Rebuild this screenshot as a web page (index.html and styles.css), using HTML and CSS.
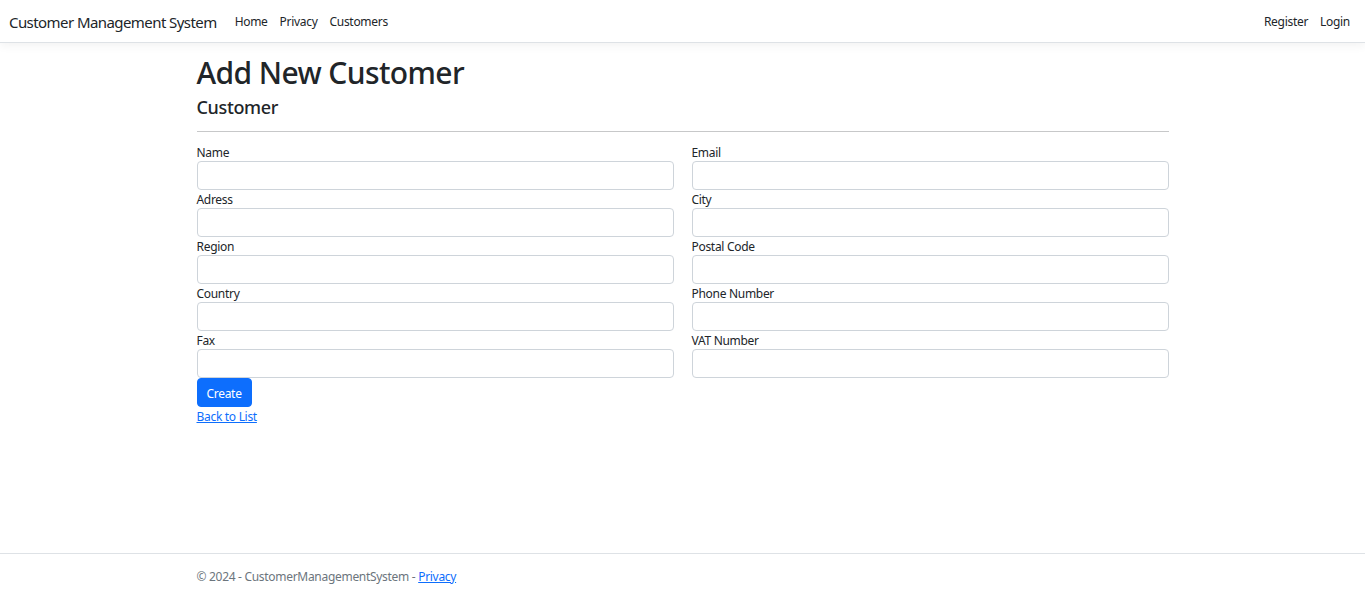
FILE: index.html
```html
<!DOCTYPE html>
<html lang="en">
<head>
<meta charset="utf-8">
<title>Add New Customer - Customer Management System</title>
<link rel="stylesheet" href="styles.css">
</head>
<body>
<header>
  <nav class="navbar">
    <a class="brand" href="#">Customer Management System</a>
    <ul class="nav nav-main">
      <li><a class="nav-link" href="#">Home</a></li>
      <li><a class="nav-link" href="#">Privacy</a></li>
      <li><a class="nav-link" href="#">Customers</a></li>
    </ul>
    <ul class="nav nav-right">
      <li><a class="nav-link" href="#">Register</a></li>
      <li><a class="nav-link" href="#">Login</a></li>
    </ul>
  </nav>
</header>
<div class="container">
  <main>
    <h1 class="title">Add New Customer</h1>
    <h4 class="subtitle">Customer</h4>
    <hr class="divider">
    <form class="form">
      <div class="grid">
        <div class="field"><label>Name</label><input class="control" type="text"></div>
        <div class="field"><label>Email</label><input class="control" type="text"></div>
        <div class="field"><label>Adress</label><input class="control" type="text"></div>
        <div class="field"><label>City</label><input class="control" type="text"></div>
        <div class="field"><label>Region</label><input class="control" type="text"></div>
        <div class="field"><label>Postal Code</label><input class="control" type="text"></div>
        <div class="field"><label>Country</label><input class="control" type="text"></div>
        <div class="field"><label>Phone Number</label><input class="control" type="text"></div>
        <div class="field"><label>Fax</label><input class="control" type="text"></div>
        <div class="field"><label>VAT Number</label><input class="control" type="text"></div>
      </div>
      <button type="button" class="btn">Create</button>
    </form>
    <div class="back"><a class="link" href="#">Back to List</a></div>
  </main>
</div>
<footer class="footer">
  <div class="container">&copy; 2024 - CustomerManagementSystem - <a class="link" href="#">Privacy</a></div>
</footer>
</body>
</html>
```
FILE: styles.css
```css
* { box-sizing: border-box; }
html, body { margin: 0; padding: 0; }
body {
  font-family: "Noto Sans", "Open Sans", sans-serif;
  font-size: 12px;
  line-height: 1.5;
  letter-spacing: -0.025em;
  color: #212529;
  background: #fff;
  min-height: 599px;
  position: relative;
}
a { text-decoration: none; }
.navbar {
  display: flex;
  align-items: center;
  padding: 6px 9px;
  border-bottom: 1px solid #dee2e6;
  box-shadow: 0 3px 9px rgba(0,0,0,.05);
  height: 43px;
  margin-bottom: 12px;
}
.brand {
  font-size: 15px;
  letter-spacing: -0.038em;
  color: #212529;
  margin-right: 12px;
  padding-top: 2px;
  white-space: nowrap;
}
.nav { list-style: none; margin: 0; padding: 0; display: flex; }
.nav-main { flex: 1; }
.nav-right { margin-right: 0; }
.nav-link {
  display: block;
  padding: 7px 6px 5px;
  color: #212529;
  font-size: 12px;
}
.container {
  width: 972px;
  margin: 0 auto;
}
.title {
  font-size: 30px;
  font-weight: 500;
  line-height: 1.2;
  letter-spacing: -0.02em;
  margin: 0 0 6px;
}
.subtitle {
  font-size: 18px;
  font-weight: 500;
  line-height: 1.2;
  letter-spacing: -0.02em;
  margin: 0 0 6px;
}
.divider {
  border: 0;
  border-top: 1px solid #212529;
  opacity: .25;
  margin: 12px 0 11px;
}
.grid {
  display: grid;
  grid-template-columns: 1fr 1fr;
  column-gap: 18px;
}
.field { display: flex; flex-direction: column; }
.field label { display: block; line-height: 17px; padding-top: 1px; }
.control {
  display: block;
  width: 100%;
  height: 29px;
  padding: 4px 9px;
  font: inherit;
  border: 1px solid #ced4da;
  border-radius: 4px;
  background: #fff;
}
.btn {
  display: inline-block;
  height: 29px;
  padding: 6px 9px 2px;
  line-height: 18px;
  font-family: inherit;
  font-size: 12px;
  letter-spacing: inherit;
  color: #fff;
  background: #0d6efd;
  border: 1px solid #0d6efd;
  border-radius: 4px;
  vertical-align: top;
}
.form { margin: 0; }
.back { padding-top: 1px; line-height: 17px; }
.link { color: #0d6efd; text-decoration: underline; }
.footer {
  position: absolute;
  bottom: 0;
  left: 0;
  width: 100%;
  border-top: 1px solid #dee2e6;
  line-height: 45px;
  color: #6c757d;
  white-space: nowrap;
}
```
